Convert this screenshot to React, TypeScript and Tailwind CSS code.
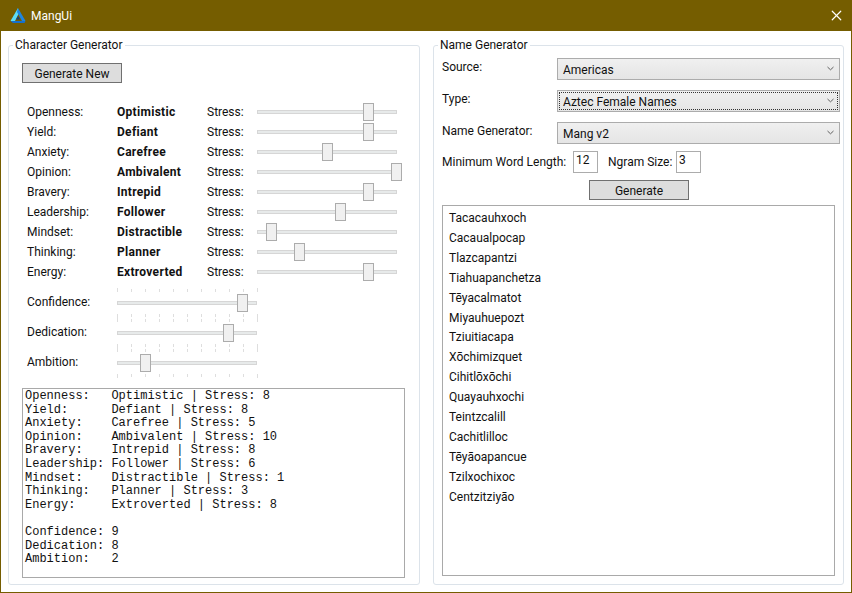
import React from 'react';
import { X } from 'lucide-react';

const traits = [
  { label: 'Openness:', value: 'Optimistic', stress: 8 },
  { label: 'Yield:', value: 'Defiant', stress: 8 },
  { label: 'Anxiety:', value: 'Carefree', stress: 5 },
  { label: 'Opinion:', value: 'Ambivalent', stress: 10 },
  { label: 'Bravery:', value: 'Intrepid', stress: 8 },
  { label: 'Leadership:', value: 'Follower', stress: 6 },
  { label: 'Mindset:', value: 'Distractible', stress: 1 },
  { label: 'Thinking:', value: 'Planner', stress: 3 },
  { label: 'Energy:', value: 'Extroverted', stress: 8 },
];

const stats = [
  { label: 'Confidence:', value: 9 },
  { label: 'Dedication:', value: 8 },
  { label: 'Ambition:', value: 2 },
];

const names = [
  'Tacacauhxoch', 'Cacaualpocap', 'Tlazcapantzi', 'Tiahuapanchetza', 'Tēyacalmatot',
  'Miyauhuepozt', 'Tziuitiacapa', 'Xōchimizquet', 'Cihitlōxōchi', 'Quayauhxochi',
  'Teintzcalill', 'Cachitlilloc', 'Tēyāoapancue', 'Tzilxochixoc', 'Centzitziyāo',
];

const summary = `Openness:   Optimistic | Stress: 8
Yield:      Defiant | Stress: 8
Anxiety:    Carefree | Stress: 5
Opinion:    Ambivalent | Stress: 10
Bravery:    Intrepid | Stress: 8
Leadership: Follower | Stress: 6
Mindset:    Distractible | Stress: 1
Thinking:   Planner | Stress: 3
Energy:     Extroverted | Stress: 8

Confidence: 9
Dedication: 8
Ambition:   2`;

function Track({ value }: { value: number }) {
  return (
    <div className="relative h-[4px] w-[140px] border border-[#d6d6d6] bg-[#e7eaea]">
      <div
        className="absolute top-[-8px] h-[18px] w-[11px] border border-[#acacac] bg-[#f0f0f0]"
        style={{ left: Math.round(value * 13.9 - 6) }}
      />
    </div>
  );
}

function Ticks({ end }: { end: 'top' | 'bottom' }) {
  const ticks = Array.from({ length: 11 }, (_, i) => i);
  return (
    <div className={`flex h-[4px] w-[141px] justify-between ${end === 'top' ? 'items-end' : 'items-start'}`}>
      {ticks.map((i) => (
        <div key={i} className={`w-px bg-[#dedede] ${i === 0 || i === 10 ? 'h-[4px]' : 'h-[3px]'}`} />
      ))}
    </div>
  );
}

function Combo({ text, focused }: { text: string; focused?: boolean }) {
  return (
    <div className="relative flex h-[22px] w-[283px] items-center border border-[#acacac] bg-gradient-to-b from-[#f0f0f0] to-[#e5e5e5] pl-[5px] pt-[1px]">
      <span>{text}</span>
      <svg className="absolute right-[5px] top-[7px]" width="7" height="5" viewBox="0 0 7 5">
        <path d="M0.5 1 L3.5 3.8 L6.5 1" fill="none" stroke="#606060" strokeWidth="1" />
      </svg>
      {focused && <div className="absolute inset-[1px] border border-dotted border-[#333]" />}
    </div>
  );
}

export default function App() {
  return (
    <div className="flex h-[593px] w-[852px] flex-col overflow-hidden border border-t-0 border-[#755d00] bg-white font-['Roboto',sans-serif] text-[12px] leading-[16px] text-[#111]">
      {/* TITLE BAR */}
      <div className="flex h-[31px] shrink-0 items-center bg-[#755d00] pl-[9px] pr-[6px] text-white">
        <svg width="16" height="15" viewBox="0 0 16 15">
          <polygon points="8,0 0.5,13 5,13 8.5,6" fill="#5cdcf8" />
          <polygon points="8,0 15.5,13 12,13 7,4" fill="#1f86e0" />
          <polygon points="0.5,13 15.5,13 14.5,15 3,15" fill="#1670cc" />
          <polygon points="8,8 10,11.5 6,11.5" fill="#123f80" />
        </svg>
        <span className="ml-[5px]">MangUi</span>
        <X className="ml-auto" size={17} strokeWidth={1.7} color="#ffffff" />
      </div>

      <div className="flex flex-1 gap-[13px] pb-[7px] pl-[7px] pr-[7px] pt-[6px]">
        {/* CHARACTER GENERATOR */}
        <fieldset className="w-[412px] rounded-[3px] border border-[#dce3ea] pl-[13px]">
          <legend className="ml-[-9px] px-[2px]">Character Generator</legend>
          <button className="mt-[10px] h-[20px] w-[100px] border border-[#707070] bg-[#dddddd] pt-[1px]">Generate New</button>

          <div className="ml-[5px] mt-[19px] grid grid-cols-[90px_90px_50px_141px]">
            {traits.map((t) => (
              <React.Fragment key={t.label}>
                <div className="flex h-[20px] items-center">{t.label}</div>
                <div className="flex h-[20px] items-center font-bold tracking-[0.3px]">{t.value}</div>
                <div className="flex h-[20px] items-center">Stress:</div>
                <div className="flex h-[20px] items-center">
                  <Track value={t.stress} />
                </div>
              </React.Fragment>
            ))}
          </div>

          <div className="ml-[5px] mt-[6px] flex flex-col">
            {stats.map((s) => (
              <div key={s.label} className="flex h-[30px] items-center">
                <div className="w-[90px] pb-[3px]">{s.label}</div>
                <div className="flex flex-col gap-[9px]">
                  <Ticks end="top" />
                  <Track value={s.value} />
                  <Ticks end="bottom" />
                </div>
              </div>
            ))}
          </div>

          <pre className="mt-[10px] h-[190px] w-[383px] border border-[#a9a9a9] pl-[2px] pt-[1px] font-['Liberation_Mono',monospace] text-[12px] leading-[13.6px] text-[#111]">
            {summary}
          </pre>
        </fieldset>

        {/* NAME GENERATOR */}
        <fieldset className="w-[411px] rounded-[3px] border border-[#dce3ea] pl-[8px]">
          <legend className="ml-[-4px] px-[2px]">Name Generator</legend>
          <div className="mt-[5px] flex h-[22px]">
            <div className="w-[115px] pt-[1px]">Source:</div>
            <Combo text="Americas" />
          </div>
          <div className="mt-[10px] flex h-[22px]">
            <div className="w-[115px] pt-[1px]">Type:</div>
            <Combo text="Aztec Female Names" focused />
          </div>
          <div className="mt-[10px] flex h-[22px]">
            <div className="w-[115px] pt-[1px]">Name Generator:</div>
            <Combo text="Mang v2" />
          </div>

          <div className="mt-[7px] flex h-[22px] items-center">
            <div className="w-[131px] whitespace-nowrap">Minimum Word Length:</div>
            <div className="h-[22px] w-[25px] border border-[#acacac] pl-[2px]">12</div>
            <div className="ml-[10px] w-[68px] whitespace-nowrap">Ngram Size:</div>
            <div className="h-[22px] w-[25px] border border-[#acacac] pl-[2px]">3</div>
          </div>

          <div className="mt-[7px] flex w-[393px] justify-center">
            <button className="ml-[1px] h-[20px] w-[100px] border border-[#707070] bg-[#dddddd] pt-[1px]">Generate</button>
          </div>

          <div className="mt-[5px] h-[371px] w-[393px] border border-[#a9a9a9] pl-[6px] pt-[2px]">
            {names.map((n) => (
              <div key={n} className="flex h-[19.93px] items-center">{n}</div>
            ))}
          </div>
        </fieldset>
      </div>
    </div>
  );
}
